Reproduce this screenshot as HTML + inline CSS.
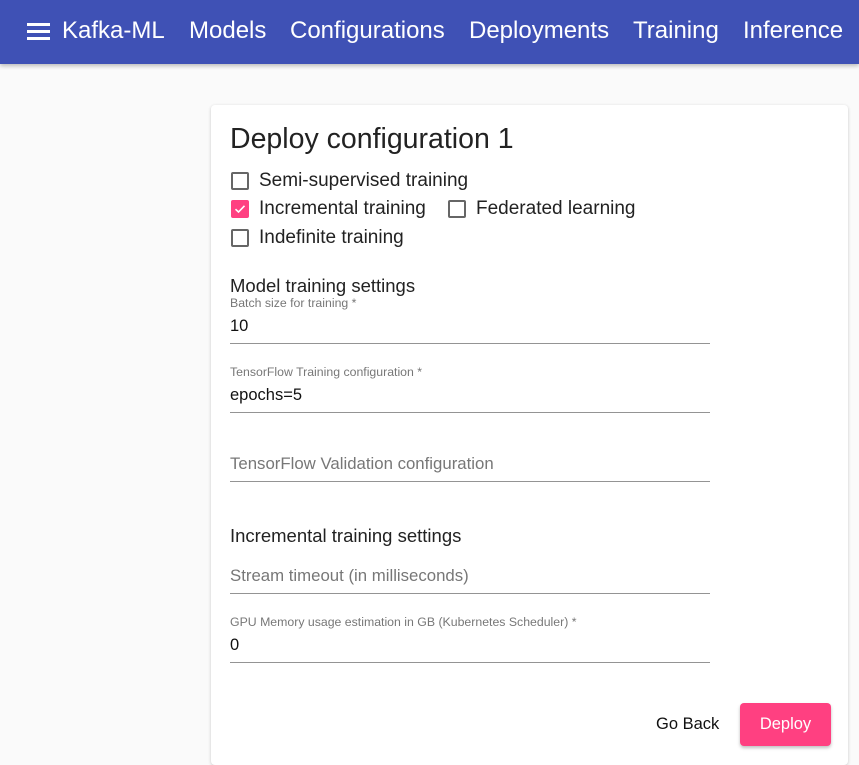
<!DOCTYPE html><html><head><style>
body{margin:0;width:859px;height:753px;background:#fafafa;font-family:"Liberation Sans",Arial,sans-serif;position:relative;overflow:hidden}
.a{position:absolute;white-space:nowrap}
.hd{position:absolute;left:0;top:0;width:859px;height:64px;background:#3f51b5;box-shadow:0 2px 4px rgba(0,0,0,.25)}
.nv{position:absolute;top:17px;color:#fff;font-size:24px}
.card{position:absolute;left:211px;top:105px;width:637px;height:660px;background:#fff;border-radius:4px;box-shadow:0 1px 3px rgba(0,0,0,.2)}
.cb{position:absolute;width:14px;height:14px;border:2px solid #666;border-radius:2px}
.ck{background:#ff4081;border-color:#ff4081}
.t{font-size:19px;color:#222}
.t2{font-size:18.5px;color:#222}
.lb{font-size:12.3px;color:#777}
.v{font-size:16.5px;color:#111}
.ph{font-size:16.8px;color:#777}
.ln{position:absolute;left:230px;width:480px;height:1px;background:#949494}
</style></head><body>
<div class="hd">
<div class="a" style="left:27px;top:23px;width:23px;height:3px;background:#fff"></div>
<div class="a" style="left:27px;top:30px;width:23px;height:3px;background:#fff"></div>
<div class="a" style="left:27px;top:37px;width:23px;height:3px;background:#fff"></div>
<div class="nv" style="left:62px">Kafka-ML</div>
<div class="nv" style="left:189px">Models</div>
<div class="nv" style="left:290px">Configurations</div>
<div class="nv" style="left:469px">Deployments</div>
<div class="nv" style="left:633px">Training</div>
<div class="nv" style="left:743px">Inference</div>
</div>
<div class="card"></div>
<div class="a" style="left:230px;top:123px;font-size:28.5px;color:#222">Deploy configuration 1</div>
<div class="cb" style="left:231px;top:172px"></div><div class="a t" style="left:259px;top:170px">Semi-supervised training</div>
<div class="cb ck" style="left:231px;top:200px"><svg width="14" height="14" viewBox="0 0 14 14" style="position:absolute;left:0;top:0"><path d="M2.5 7.2 L5.5 10 L11.5 3.8" stroke="#fff" stroke-width="1.6" fill="none"/></svg></div><div class="a t" style="left:259px;top:198px">Incremental training</div>
<div class="cb" style="left:448px;top:200px"></div><div class="a t" style="left:476px;top:198px">Federated learning</div>
<div class="cb" style="left:231px;top:229px"></div><div class="a t" style="left:259px;top:227px">Indefinite training</div>
<div class="a t2" style="left:230px;top:275px">Model training settings</div>
<div class="a lb" style="left:230px;top:296px">Batch size for training *</div>
<div class="a v" style="left:230px;top:317px">10</div>
<div class="ln" style="top:343px"></div>
<div class="a lb" style="left:230px;top:365px">TensorFlow Training configuration *</div>
<div class="a v" style="left:230px;top:386px">epochs=5</div>
<div class="ln" style="top:412px"></div>
<div class="a ph" style="left:230px;top:454px">TensorFlow Validation configuration</div>
<div class="ln" style="top:481px"></div>
<div class="a t2" style="left:230px;top:525px">Incremental training settings</div>
<div class="a ph" style="left:230px;top:566px">Stream timeout (in milliseconds)</div>
<div class="ln" style="top:593px"></div>
<div class="a lb" style="left:230px;top:615px">GPU Memory usage estimation in GB (Kubernetes Scheduler) *</div>
<div class="a v" style="left:230px;top:636px">0</div>
<div class="ln" style="top:662px"></div>
<div class="a" style="left:656px;top:715px;font-size:16.5px;color:#111">Go Back</div>
<div class="a" style="left:740px;top:703px;width:91px;height:43px;background:#ff4081;border-radius:4px;box-shadow:0 2px 3px rgba(0,0,0,.25);color:#fff;font-size:16.5px;text-align:center;line-height:43px">Deploy</div>
</body></html>
